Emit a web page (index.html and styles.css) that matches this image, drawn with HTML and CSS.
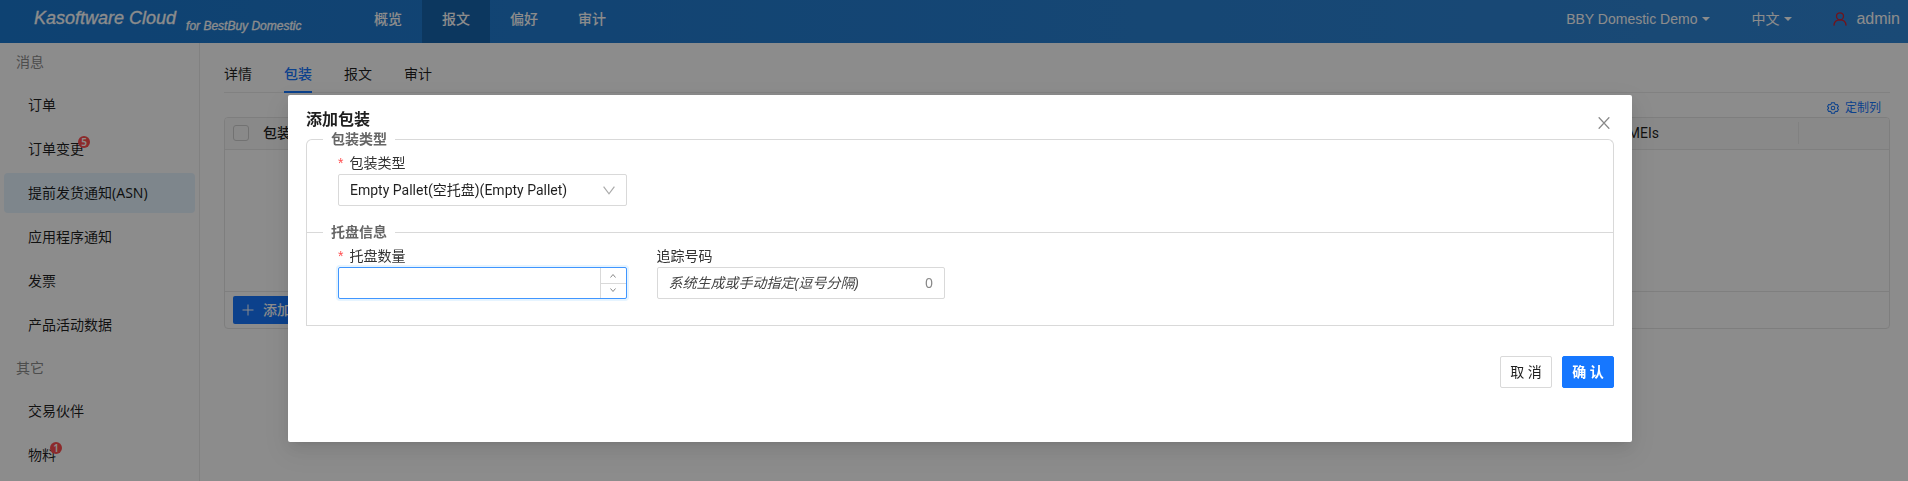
FILE: index.html
```html
<!DOCTYPE html>
<html lang="zh-CN">
<head>
<meta charset="utf-8">
<title>Kasoftware Cloud</title>
<link rel="stylesheet" href="styles.css">
</head>
<body>
<div class="app">
  <header class="topbar">
    <div class="brand"><span class="brand-name">Kasoftware Cloud</span><span class="brand-sub">for BestBuy Domestic</span></div>
    <nav class="topnav">
      <a class="topnav-item" href="#">概览</a>
      <a class="topnav-item active" href="#">报文</a>
      <a class="topnav-item" href="#">偏好</a>
      <a class="topnav-item" href="#">审计</a>
    </nav>
    <div class="account">
      <button class="drop" type="button">BBY Domestic Demo<span class="caret"></span></button>
      <button class="drop" type="button">中文<span class="caret"></span></button>
      <a class="user" href="#">
        <svg class="user-icon" viewBox="0 0 14 14" fill="none" stroke="currentColor" stroke-width="1.3"><circle cx="7" cy="4.3" r="3.5"/><path d="M.9 13.6C1.1 10 3.6 7.8 7 7.8s5.900 2.200 6.100 5.800"/></svg>
        admin
      </a>
    </div>
  </header>
  <div class="body">
    <aside class="sidebar">
      <h2 class="group">消息</h2>
      <a class="item" href="#">订单</a>
      <a class="item" href="#"><span class="badged">订单变更<span class="badge">5</span></span></a>
      <a class="item selected" href="#">提前发货通知(ASN)</a>
      <a class="item" href="#">应用程序通知</a>
      <a class="item" href="#">发票</a>
      <a class="item" href="#">产品活动数据</a>
      <h2 class="group">其它</h2>
      <a class="item" href="#">交易伙伴</a>
      <a class="item" href="#"><span class="badged">物料<span class="badge">1</span></span></a>
    </aside>
    <main class="main">
      <nav class="tabs">
        <a class="tab" href="#">详情</a>
        <a class="tab active" href="#">包装</a>
        <a class="tab" href="#">报文</a>
        <a class="tab" href="#">审计</a>
      </nav>
      <div class="tools">
        <a class="customize" href="#">
          <svg class="gear" viewBox="0 0 14 14" fill="none" stroke="currentColor" stroke-width="1.2" stroke-linejoin="round"><path d="M5.300.8h3.400l.5 1.700 1.200.7 1.700-.4 1.300 2.600L12.200 6.400v1.200l1.200 1-1.300 2.600-1.700-.4-1.200.7-.5 1.700H5.300l-.5-1.700-1.200-.7-1.700.4L.6 8.600l1.200-1V6.400L.6 5.400l1.300-2.600 1.700.4 1.200-.7z"/><circle cx="7" cy="7" r="2.100"/></svg>
          定制列
        </a>
      </div>
      <div class="panel">
        <table class="grid">
          <thead>
            <tr>
              <th class="col-check"><input class="check" type="checkbox" aria-label="全选"></th>
              <th class="col-pack">包装</th>
              <th class="col-imei">IMEIs</th>
              <th class="col-ops"><span class="divider"></span></th>
            </tr>
          </thead>
          <tbody><tr><td class="blank" colspan="4"></td></tr></tbody>
        </table>
        <div class="panel-foot">
          <button class="add" type="button">
            <svg class="plus" viewBox="0 0 12 12" stroke="currentColor"><path d="M6 .5v11M.5 6h11"/></svg>
            添加包装
          </button>
        </div>
      </div>
    </main>
  </div>
</div>

<div class="mask">
  <section class="modal" role="dialog" aria-labelledby="modal-title">
    <h1 class="modal-title" id="modal-title">添加包装</h1>
    <button class="close" type="button" aria-label="关闭"><svg viewBox="0 0 12 12" stroke="currentColor" stroke-width="1.3"><path d="M.7.300l10.600 11.400M11.300.300L.7 11.700"/></svg></button>
    <form>
      <fieldset class="section first">
        <legend>包装类型</legend>
        <div class="fields">
          <div class="field">
            <label class="required" for="type">包装类型</label>
            <div class="control">
              <select id="type"><option>Empty Pallet(空托盘)(Empty Pallet)</option></select>
              <svg class="chevron" viewBox="0 0 12 9" fill="none" stroke="currentColor" stroke-width="1.200"><path d="M.6.600 6 7.800 11.400.600"/></svg>
            </div>
          </div>
        </div>
      </fieldset>
      <fieldset class="section">
        <legend>托盘信息</legend>
        <div class="fields">
          <div class="field">
            <label class="required" for="count">托盘数量</label>
            <div class="control focused">
              <input id="count" type="text" inputmode="numeric">
              <div class="stepper">
                <button type="button" aria-label="增加"><svg viewBox="0 0 8 5" fill="none" stroke="currentColor"><path d="M1.500 4.500 4 1.500l2.500 3"/></svg></button>
                <button type="button" aria-label="减少"><svg viewBox="0 0 8 5" fill="none" stroke="currentColor"><path d="M1.500.5 4 3.500 6.500.5"/></svg></button>
              </div>
            </div>
          </div>
          <div class="field">
            <label for="track">追踪号码</label>
            <div class="control">
              <input id="track" class="hinted" type="text" placeholder="系统生成或手动指定(逗号分隔)">
              <span class="count">0</span>
            </div>
          </div>
        </div>
      </fieldset>
      <div class="actions">
        <button class="btn" type="button">取 消</button>
        <button class="btn primary" type="submit">确 认</button>
      </div>
    </form>
  </section>
</div>
</body>
</html>
```
FILE: styles.css
```css
* { box-sizing: border-box; }

body {
  margin: 0;
  font: 14px/22px "Noto Sans", "Noto Sans CJK SC", sans-serif;
  color: rgba(0, 0, 0, 0.88);
  background: #fff;
}

a { color: inherit; text-decoration: none; }
button, input, select { font: inherit; color: inherit; }
button { cursor: pointer; }
svg { display: block; }

.app { height: 100vh; display: flex; flex-direction: column; overflow: hidden; }

/* Top bar */
.topbar {
  display: flex;
  flex: none;
  height: 43px;
  padding: 0 8px 0 34px;
  color: #fff;
  background: linear-gradient(90deg, #1b78cf, #3187d7);
  font-family: "Liberation Sans", "Noto Sans CJK SC", sans-serif;
}
.brand { display: flex; width: 320px; font-style: italic; white-space: nowrap; }
.brand-name { font-size: 18px; line-height: 36px; -webkit-text-stroke: 0.3px; }
.brand-sub { margin-left: 10px; font-size: 12px; line-height: 52px; -webkit-text-stroke: 0.3px; }
.topnav { display: flex; }
.topnav-item { width: 68px; text-align: center; line-height: 38px; font-weight: 500; }
.topnav-item.active { background: #1764ad; }
.account { display: flex; margin-left: auto; line-height: 38px; }
.drop { display: flex; align-items: center; height: 38px; margin-right: 41px; padding: 0; border: 0; background: none; }
.caret { margin-left: 5px; border: 4px solid transparent; border-top-color: #fff; border-bottom: 0; }
.user { display: flex; align-items: center; gap: 9px; height: 37px; font-size: 16px; }
.user-icon { width: 14px; height: 14px; color: #cf2331; }

/* Side menu */
.body { display: flex; flex: 1; min-height: 0; }
.sidebar { flex: none; width: 200px; border-right: 1px solid #ebebeb; }
.group { margin: 0; padding: 8px 16px; font-size: 14px; font-weight: 400; line-height: 22px; color: #8c8c8c; }
.item { display: block; height: 40px; margin: 4px; padding: 0 24px; border-radius: 4px; line-height: 40px; white-space: nowrap; }
.item.selected { background: #e6f4ff; }
.item + .group { margin-top: 4px; }
.badged { position: relative; }
.badge {
  position: absolute;
  top: -3px;
  right: -6px;
  width: 12px;
  height: 12px;
  border-radius: 6px;
  background: #ff4d4f;
  color: #fff;
  font-size: 10px;
  font-weight: 600;
  line-height: 12px;
  text-align: center;
}

/* Content */
.main { flex: 1; min-width: 0; padding: 0 18px 0 24px; }
.tabs { display: flex; gap: 32px; height: 50px; padding-top: 20px; border-bottom: 1px solid #ececec; }
.tab { height: 30px; }
.tab.active { color: #1677ff; border-bottom: 2px solid #1677ff; font-weight: 500; }
.tools { display: flex; justify-content: flex-end; height: 24px; padding: 5px 9px 0 0; }
.customize { display: flex; align-items: center; gap: 6px; height: 20px; font-size: 12px; line-height: 20px; color: #1677ff; }
.gear { width: 12px; height: 12px; }
.panel { border: 1px solid #e6e6e6; border-radius: 4px; overflow: hidden; }
.grid { width: 100%; border-collapse: collapse; table-layout: fixed; }
.grid th { height: 31px; padding: 0; background: #fafafa; border-bottom: 1px solid #e8e8e8; font-weight: 500; text-align: left; }
.col-check { width: 38px; }
.grid .col-check { padding-left: 8px; }
.col-pack { width: 1361px; }
.grid .col-imei { font-family: Roboto, sans-serif; font-weight: 400; }
.col-ops { width: 91px; }
.divider { display: block; width: 1px; height: 22px; background: #ececec; }
.check { display: block; appearance: none; width: 16px; height: 16px; margin: 0; border: 1px solid #d0d0d0; border-radius: 3px; }
.grid .blank { height: 142px; padding: 0; }
.panel-foot { padding: 4px 8px; border-top: 1px solid #e8e8e8; }
.add { display: flex; align-items: center; gap: 9px; height: 28px; padding: 0 9px; border: 0; border-radius: 2px; background: #1677ff; color: #fff; font-weight: 500; }
.plus { width: 12px; height: 12px; }

/* Dialog */
.mask { position: fixed; inset: 0; padding: 95px 276px 0 288px; background: rgba(0, 0, 0, 0.45); }
.modal {
  position: relative;
  padding: 13px 18px 54px;
  border-radius: 2px;
  background: #fff;
  box-shadow: 0 6px 16px rgba(0, 0, 0, 0.08), 0 3px 6px -4px rgba(0, 0, 0, 0.12), 0 9px 28px 8px rgba(0, 0, 0, 0.05);
}
.modal-title { margin: 0; font-size: 16px; font-weight: 600; line-height: 22px; }
.close { position: absolute; top: 22px; right: 22px; padding: 0; border: 0; background: none; color: #888; }
.close svg { width: 12px; height: 12px; }
.section { min-width: 0; margin: -9px 0 0; padding: 4px 31px 26px 31px; border: 1px solid #d9d9d9; }
.section.first { margin-top: 0; border-bottom: 0; border-radius: 6px 6px 0 0; }
.section legend { margin-left: -15px; padding: 0 8px; font-weight: 600; line-height: 18px; color: #666; }
.fields { display: grid; grid-template-columns: repeat(4, 1fr); gap: 30px; }
.field label { display: block; height: 22px; line-height: 22px; color: #333; }
.required::before { content: "*"; margin-right: 6px; color: #ff4d4f; font-family: "Liberation Sans", sans-serif; }
.control { display: flex; position: relative; height: 32px; border: 1px solid #d9d9d9; border-radius: 2px; background: #fff; }
.control.focused { border-color: #4096ff; box-shadow: 0 0 0 2px rgba(5, 145, 255, 0.1); }
.control select, .control input { flex: 1; min-width: 0; padding: 0 11px; border: 0; outline: 0; background: none; }
.control select { appearance: none; font-family: Roboto, "Noto Sans CJK SC", sans-serif; }
.chevron { position: absolute; top: 11px; right: 11px; width: 12px; height: 9px; color: #aaa; pointer-events: none; }
.hinted::placeholder { color: #444; font-style: italic; opacity: 1; }
.count { padding-right: 11px; line-height: 30px; color: #888; }
.stepper { display: flex; flex-direction: column; width: 26px; border-left: 1px solid #d9d9d9; }
.stepper button { display: flex; flex: 1; align-items: center; justify-content: center; padding: 0; border: 0; background: none; color: #888; }
.stepper button + button { border-top: 1px solid #d9d9d9; }
.stepper svg { width: 8px; height: 5px; }
.actions { display: flex; justify-content: flex-end; gap: 10px; margin-top: 30px; }
.btn { width: 52px; height: 32px; padding: 0; border: 1px solid #d9d9d9; border-radius: 2px; background: #fff; }
.btn.primary { border-color: #1677ff; background: #1677ff; color: #fff; font-weight: 600; }
```
